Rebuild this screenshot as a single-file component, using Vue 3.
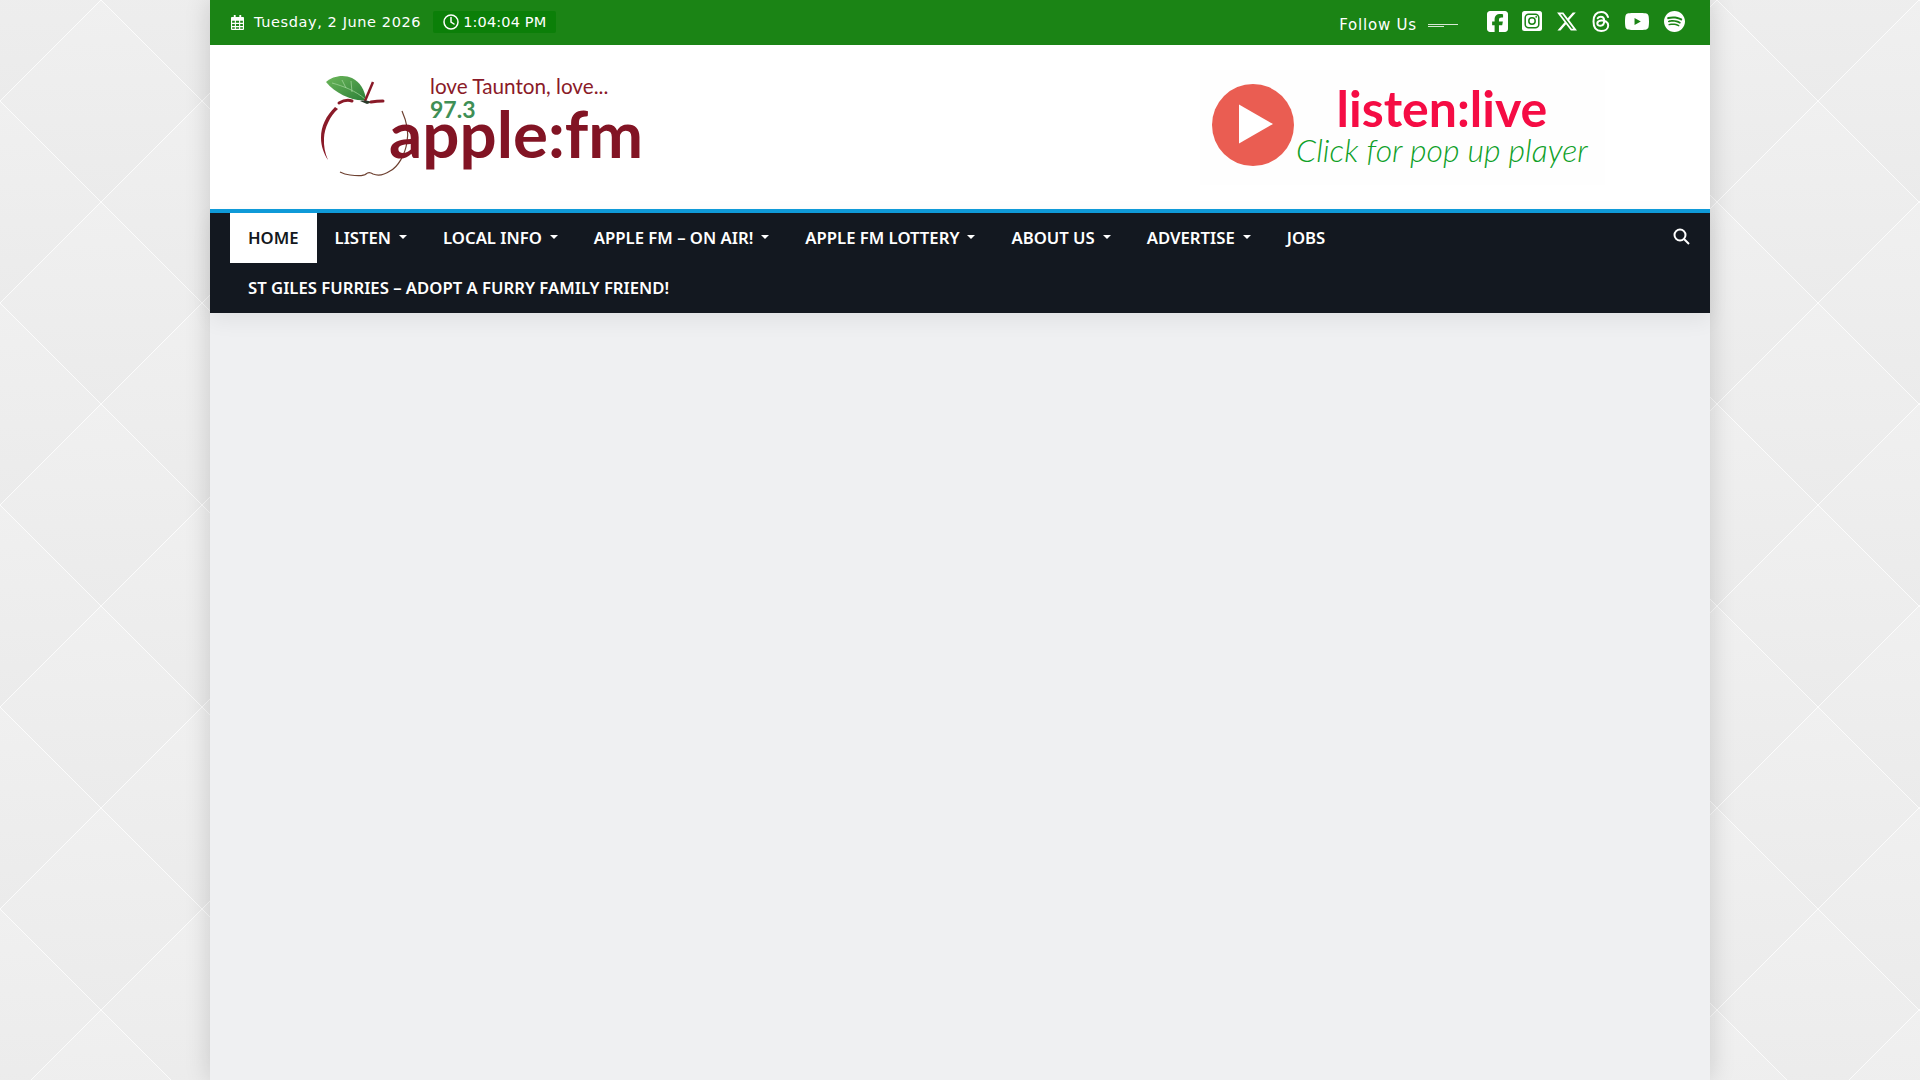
<template>
  <div class="page">
    <!-- top bar -->
    <div class="topbar">
      <div class="top-left">
        <svg class="cal" viewBox="0 0 14 16">
          <path fill="#fff" fill-rule="evenodd" d="M3 0h2v2h4V0h2v2h2a1 1 0 0 1 1 1v12a1 1 0 0 1-1 1H1a1 1 0 0 1-1-1V3a1 1 0 0 1 1-1h2zM1.2 6v2.3h2.9V6zm4.1 0v2.3h3.4V6zm4.6 0v2.3h2.9V6zM1.2 9.500v2.300h2.900V9.500zm4.100 0v2.300h3.400V9.500zm4.600 0v2.300h2.900V9.500zM1.200 13v1.800h2.900V13zm4.100 0v1.800h3.400V13zm4.600 0v1.800h2.900V13z"/>
        </svg>
        <span class="date">Tuesday, 2 June 2026</span>
        <span class="time">
          <svg class="clock" viewBox="0 0 16 16" fill="none" stroke="#fff" stroke-width="1.500">
            <circle cx="8" cy="8" r="7" />
            <path d="M8 3.500V8l3 2" stroke-linecap="round" />
          </svg>
          1:04:04 PM
        </span>
      </div>
      <div class="top-right">
        <span class="follow">Follow Us</span>
        <span class="follow-lines"><i class="long"></i><i class="short"></i></span>
        <div class="socials">
          <svg class="ic-fb" viewBox="0 32 448 448"><path fill="#fff" d="M64 32C28.700 32 0 60.700 0 96V416c0 35.300 28.700 64 64 64h98.200V334.200H109.400V256h52.800V222.300c0-87.100 39.400-127.500 125-127.500c16.200 0 44.200 3.200 55.700 6.400V172c-6-.6-16.500-1-29.600-1c-42 0-58.200 15.900-58.200 57.200V256h83.600l-14.400 78.200H255V480H384c35.300 0 64-28.700 64-64V96c0-35.300-28.700-64-64-64H64z"/></svg>
          <svg class="ic-ig" viewBox="0 0 20 20">
            <rect width="20" height="20" rx="2.500" fill="#fff" />
            <rect x="3.200" y="3.200" width="13.600" height="13.600" rx="3.500" fill="none" stroke="#1b8415" stroke-width="1.500" />
            <circle cx="10" cy="10" r="3.200" fill="none" stroke="#1b8415" stroke-width="1.500" />
            <circle cx="14.200" cy="5.800" r="0.900" fill="#1b8415" />
          </svg>
          <svg class="ic-x" viewBox="26 48 461 416"><path fill="#fff" d="M389.200 48h70.600L305.600 224.200 487 464H345L233.700 318.600 106.500 464H35.800L200.700 275.500 26.800 48H172.400L272.900 180.900 389.200 48zM364.400 421.800h39.100L151.100 88h-42L364.400 421.800z"/></svg>
          <svg class="ic-th" viewBox="0 0 18 21" fill="none" stroke="#fff" stroke-width="2" stroke-linecap="round">
            <path d="M16 6C15 2.800 12.800 1 9.200 1 4.200 1 1.500 4.500 1.500 10.500S4.200 20 9.200 20c4 0 7-2.300 7-5.500 0-3.500-3.300-5.300-7-5-2.500.2-3.900 1.300-3.900 2.900 0 1.500 1.400 2.500 3.200 2.400 2.500-.1 3.700-2 3.700-4.800 0-2.600-1.200-4.300-3.500-4.300-1.400 0-2.400.6-3 1.600" />
          </svg>
          <svg class="ic-yt" viewBox="15 64 546 384"><path fill="#fff" d="M549.655 124.083c-6.281-23.650-24.787-42.276-48.284-48.597C458.781 64 288 64 288 64S117.220 64 74.629 75.486c-23.497 6.322-42.003 24.947-48.284 48.597-11.412 42.867-11.412 132.305-11.412 132.305s0 89.438 11.412 132.305c6.281 23.650 24.787 41.500 48.284 47.821C117.220 448 288 448 288 448s170.780 0 213.371-11.486c23.497-6.321 42.003-24.171 48.284-47.821 11.412-42.867 11.412-132.305 11.412-132.305s0-89.438-11.412-132.305zm-317.510 213.508V175.185l142.739 81.205-142.739 81.201z"/></svg>
          <svg class="ic-sp" viewBox="0 8 496 496"><path fill="#fff" d="M248 8C111.100 8 0 119.100 0 256s111.100 248 248 248 248-111.100 248-248S384.900 8 248 8zm100.700 364.900c-4.200 0-6.800-1.300-10.700-3.600-62.400-37.600-135-39.200-206.700-24.500-3.900 1-9 2.600-11.900 2.600-9.700 0-15.800-7.700-15.800-15.800 0-10.300 6.100-15.200 13.600-16.800 81.900-18.100 165.600-16.500 237 26.200 6.100 3.900 9.700 7.400 9.700 16.500s-7.100 15.400-15.200 15.400zm26.900-65.600c-5.200 0-8.700-2.300-12.300-4.200-62.500-37-155.700-51.900-238.600-29.400-4.800 1.300-7.400 2.600-11.900 2.600-10.700 0-19.400-8.700-19.400-19.400s5.200-17.800 15.500-20.700c27.800-7.800 56.200-13.600 97.800-13.600 64.900 0 127.600 16.100 177 45.500 8.100 4.800 11.300 11 11.300 19.700-.1 10.800-8.500 19.500-19.400 19.500zm31-76.200c-5.200 0-8.400-1.300-12.900-3.900-71.200-42.500-198.500-52.700-280.900-29.700-3.600 1-8.100 2.600-12.900 2.600-13.200 0-23.300-10.300-23.300-23.600 0-13.600 8.400-21.300 17.400-23.900 35.200-10.300 74.600-15.200 117.500-15.200 73 0 149.500 15.200 205.400 47.800 7.800 4.500 12.900 10.700 12.900 22.600 0 13.600-11 23.300-23.700 23.300z"/></svg>
        </div>
      </div>
    </div>

    <!-- logo and banner -->
    <div class="header">
      <div class="logo">
        <svg class="apple" viewBox="0 0 95 110" fill="none">
          <defs>
            <linearGradient id="leaf" x1="0" y1="0" x2="1" y2="1">
              <stop offset="0" stop-color="#6cb75a" />
              <stop offset="1" stop-color="#2c7f38" />
            </linearGradient>
          </defs>
          <path d="M8 12C14 6 26 4 34 8 42 12 47 20 48 30 36 32 18 24 8 12z" fill="url(#leaf)" />
          <path d="M14 13c11 3 24 8 33 16M24 10l4 8M33 11l1 11" stroke="#a8d8a0" stroke-width=".7" />
          <path d="M47 31l8-19" stroke="#8a1a28" stroke-width="2.500" />
          <path d="M42 31c4-1 9 0 13 1l-6 2z" fill="#2a3a2a" />
          <path d="M21 33q7-4 13-2M53 32q6-1 12-1" stroke="#8a1a28" stroke-width="3" stroke-linecap="round" />
          <path d="M17 37C8 46 3 56 3 68 3 76 6 84 10 90 7 83 5.500 76 6 68 6.500 58 12 46 20 39z" fill="#8a1a28" />
          <path d="M84 41C88 50 91 62 89 72 87 85 80 97 72 101 66 105 60 106 55 104 52 102 50 102 48 104 46 106 40 106 32 105 28 104.500 24 103 22 102" stroke="#6d4030" stroke-width="1.200" />
        </svg>
        <span class="tagline">love Taunton, love...</span>
        <span class="freq">97.3</span>
        <span class="wordmark">apple:fm</span>
      </div>
      <div class="banner">
        <svg class="play" viewBox="0 0 82 82">
          <circle cx="41" cy="41" r="41" fill="#ea5d52" />
          <path d="M27 20.500v39L61 40z" fill="#fff" />
        </svg>
        <div class="banner-text">
          <span class="listen">listen:live</span>
          <span class="click">Click for pop up player</span>
        </div>
      </div>
    </div>

    <!-- main navigation -->
    <nav class="nav">
      <ul class="menu">
        <li v-for="item in menu" :key="item.label" :class="{ active: item.active }">
          {{ item.label }}<i v-if="item.caret" class="caret"></i>
        </li>
      </ul>
      <svg class="search" viewBox="0 0 17 17" fill="none" stroke="#fff">
        <circle cx="7" cy="7" r="5.500" stroke-width="2" />
        <path d="M11 11l5 5" stroke-width="2" />
      </svg>
    </nav>

    <div class="content"></div>
  </div>
</template>

<script setup>
const menu = [
  { label: 'HOME', active: true },
  { label: 'LISTEN', caret: true },
  { label: 'LOCAL INFO', caret: true },
  { label: 'APPLE FM – ON AIR!', caret: true },
  { label: 'APPLE FM LOTTERY', caret: true },
  { label: 'ABOUT US', caret: true },
  { label: 'ADVERTISE', caret: true },
  { label: 'JOBS' },
  { label: 'ST GILES FURRIES – ADOPT A FURRY FAMILY FRIEND!' },
]
</script>

<style>
html, body { height: 100%; }
body {
  background-color: #eeeeee;
  background-size: 202px 202px;
  background-image: url("data:image/svg+xml,%3Csvg xmlns='http://www.w3.org/2000/svg' width='202' height='202'%3E%3Cdefs%3E%3ClinearGradient id='g' x1='0' y1='0' x2='0' y2='1'%3E%3Cstop offset='0' stop-color='%23f0f0f0'/%3E%3Cstop offset='1' stop-color='%23ebebeb'/%3E%3C/linearGradient%3E%3C/defs%3E%3Cpath d='M101 0L202 101L101 202L0 101Z' fill='url(%23g)'/%3E%3Cg fill='url(%23g)'%3E%3Cpath d='M0 -101L101 0L0 101L-101 0Z'/%3E%3Cpath d='M202 -101L303 0L202 101L101 0Z'/%3E%3Cpath d='M0 101L101 202L0 303L-101 202Z'/%3E%3Cpath d='M202 101L303 202L202 303L101 202Z'/%3E%3C/g%3E%3Cpath d='M101 0L202 101L101 202L0 101Z' fill='none' stroke='%23ffffff' stroke-width='.8'/%3E%3C/svg%3E");
}
</style>

<style scoped>
.page { width: 1500px; min-height: 1080px; margin: 0 auto; background: #eff0f2; box-shadow: 0 0 24px rgba(0, 0, 0, 0.16); display: flex; flex-direction: column; }

.topbar { height: 45px; background: #1b8415; color: #fff; display: flex; justify-content: space-between; padding: 0 25px 0 21px; font-family: "DejaVu Sans", sans-serif; }
.top-left { display: flex; align-items: center; padding-bottom: 1px; }
.cal { width: 13px; height: 15px; margin-right: 10px; }
.date { font-size: 14.500px; letter-spacing: 0.6px; }
.time { display: flex; align-items: center; height: 22px; background: #0b7f08; border-radius: 2px; margin-left: 12px; padding: 0 10px; font-size: 14.500px; letter-spacing: 0.15px; gap: 4px; }
.clock { width: 16px; height: 16px; }
.top-right { display: flex; align-items: center; }
.follow { font-size: 15px; letter-spacing: 0.8px; margin-top: 4px; }
.follow-lines { display: flex; flex-direction: column; width: 30px; gap: 1px; margin: 5px 29px 0 11px; }
.follow-lines i { display: block; height: 1px; background: #d7e8d4; }
.follow-lines .short { width: 16px; }
.socials { display: flex; align-items: center; gap: 15px; margin-top: -3px; }
.ic-fb { width: 21px; height: 21px; margin-right: -1px; }
.ic-ig { width: 20px; height: 20px; }
.ic-x { width: 20px; height: 19px; }
.ic-th { width: 18px; height: 21px; }
.ic-yt { width: 24px; height: 17px; }
.ic-sp { width: 21px; height: 21px; }

.header { height: 164px; background: #fff; display: flex; justify-content: space-between; align-items: center; padding: 0 105px 0 110px; }
.logo { position: relative; width: 325px; height: 108px; }
.apple { position: absolute; left: -2px; top: -3px; width: 95px; height: 110px; }
.tagline { position: absolute; left: 110px; top: 3px; font: 400 20.700px/1 "Lato", sans-serif; color: #8a1a28; white-space: nowrap; }
.freq { position: absolute; left: 110px; top: 25px; font: 700 23px/1 "Lato", sans-serif; color: #3f8f56; }
.wordmark { position: absolute; left: 69px; top: 27px; font: 700 65.500px/1 "Lato", sans-serif; color: #821424; white-space: nowrap; }
.banner { display: flex; align-items: center; box-sizing: border-box; width: 405px; height: 115px; background: #fefefe; padding: 0 0 4px 12px; }
.play { width: 82px; height: 82px; flex-shrink: 0; }
.banner-text { display: flex; flex-direction: column; align-items: center; margin-left: 2px; }
.listen { font: 700 50px/50px "Lato", sans-serif; color: #f50c44; }
.click { font: italic 300 32px/34px "Lato", sans-serif; color: #0fa028; white-space: nowrap; }

.nav { display: flex; justify-content: space-between; align-items: flex-start; background: #131820; border-top: 4px solid #0f9ad8; padding: 0 20px; box-shadow: 0 8px 20px rgba(0, 0, 0, 0.06); }
.menu { list-style: none; margin: 0; padding: 0; display: flex; flex-wrap: wrap; flex: 1; font: 600 16.700px "Noto Sans", sans-serif; color: #fff; }
.menu li { display: flex; align-items: center; height: 50px; box-sizing: border-box; padding: 0 18px 2px; white-space: nowrap; }
.menu .active { background: #fff; color: #131820; }
.caret { width: 0; height: 0; border-top: 4px solid #fff; border-left: 4px solid transparent; border-right: 4px solid transparent; margin-left: 8px; }
.search { width: 17px; height: 17px; margin-top: 15px; }

.content { flex: 1; }
</style>
